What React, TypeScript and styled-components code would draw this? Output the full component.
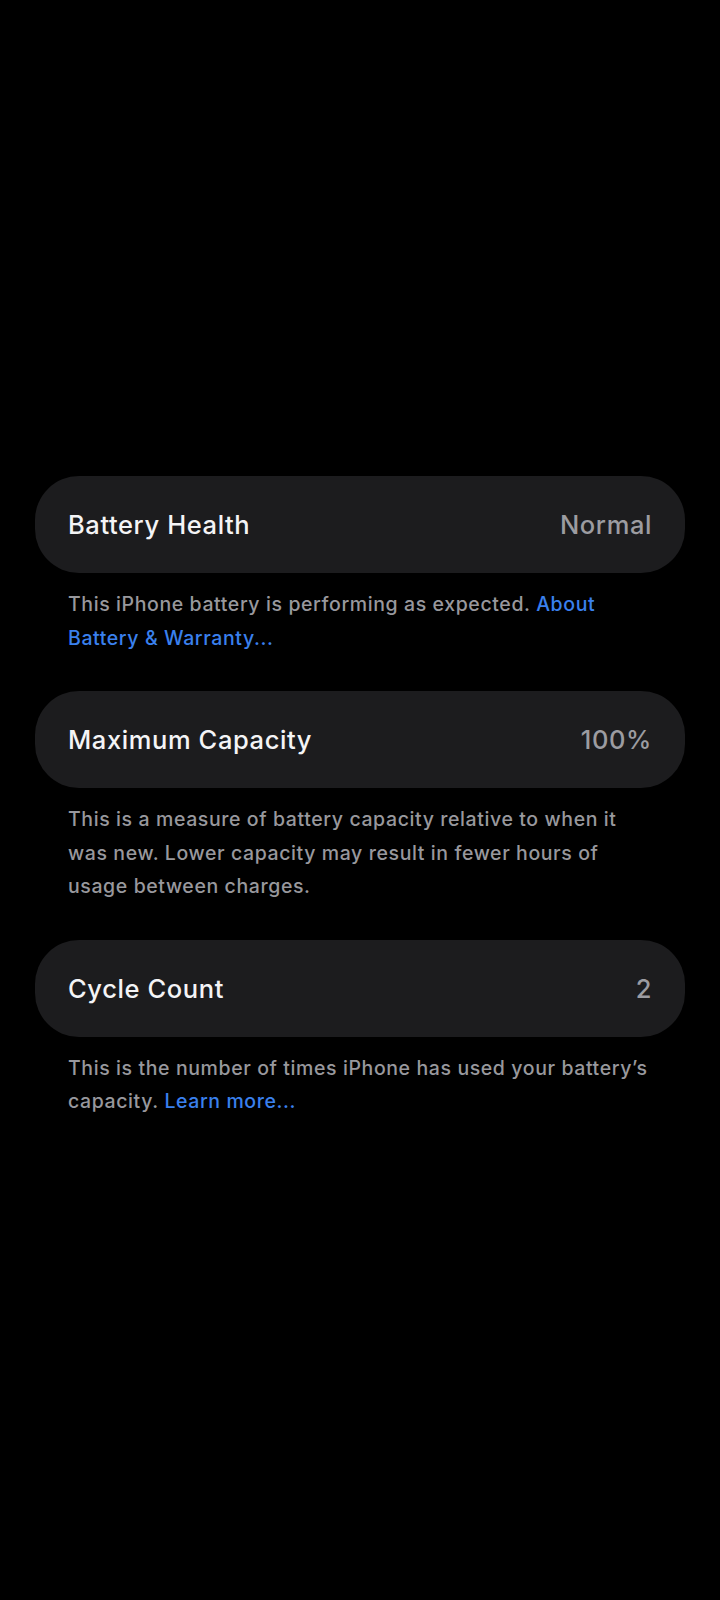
import React from 'react';
import styled, { createGlobalStyle } from 'styled-components';

const GlobalStyle = createGlobalStyle`
  html, body {
    margin: 0;
    padding: 0;
    background: #000;
  }
  body {
    font-family: Inter, "Noto Sans", "Liberation Sans", sans-serif;
    -webkit-font-smoothing: antialiased;
  }
`;

const Page = styled.div`
  min-height: 1600px;
  background: #000;
  padding: 476px 35px 0;
  box-sizing: border-box;
`;

const Section = styled.section`
  margin-bottom: 36px;
`;

const Row = styled.div`
  display: flex;
  align-items: center;
  justify-content: space-between;
  height: 97px;
  padding: 0 33px;
  box-sizing: border-box;
  background: #1c1c1e;
  border-radius: 44px;
`;

const Label = styled.span`
  color: #f4f4f6;
  font-size: 25.5px;
  font-weight: 500;
  letter-spacing: 0.6px;
`;

const Value = styled.span`
  color: #9c9ca1;
  font-size: 25.5px;
  font-weight: 500;
  letter-spacing: 0.6px;
`;

const Footer = styled.p`
  margin: 0;
  padding: 15px 33px 0;
  color: #98989d;
  font-size: 19.5px;
  font-weight: 500;
  line-height: 33.5px;
  letter-spacing: 0.6px;
`;

const Link = styled.a`
  color: #3a80ee;
  text-decoration: none;
`;

type Item = {
  label: string;
  value: string;
  text: string;
  link?: string;
};

const items: Item[] = [
  {
    label: 'Battery Health',
    value: 'Normal',
    text: 'This iPhone battery is performing as expected.',
    link: 'About Battery & Warranty...',
  },
  {
    label: 'Maximum Capacity',
    value: '100%',
    text: 'This is a measure of battery capacity relative to when it was new. Lower capacity may result in fewer hours of usage between charges.',
  },
  {
    label: 'Cycle Count',
    value: '2',
    text: 'This is the number of times iPhone has used your battery\u2019s capacity.',
    link: 'Learn more...',
  },
];

export default function App() {
  return (
    <>
      <GlobalStyle />
      <Page>
        {items.map((item) => (
          <Section key={item.label}>
            <Row>
              <Label>{item.label}</Label>
              <Value>{item.value}</Value>
            </Row>
            <Footer>
              {item.text}
              {item.link && (
                <>
                  {' '}
                  <Link href="#">{item.link}</Link>
                </>
              )}
            </Footer>
          </Section>
        ))}
      </Page>
    </>
  );
}
